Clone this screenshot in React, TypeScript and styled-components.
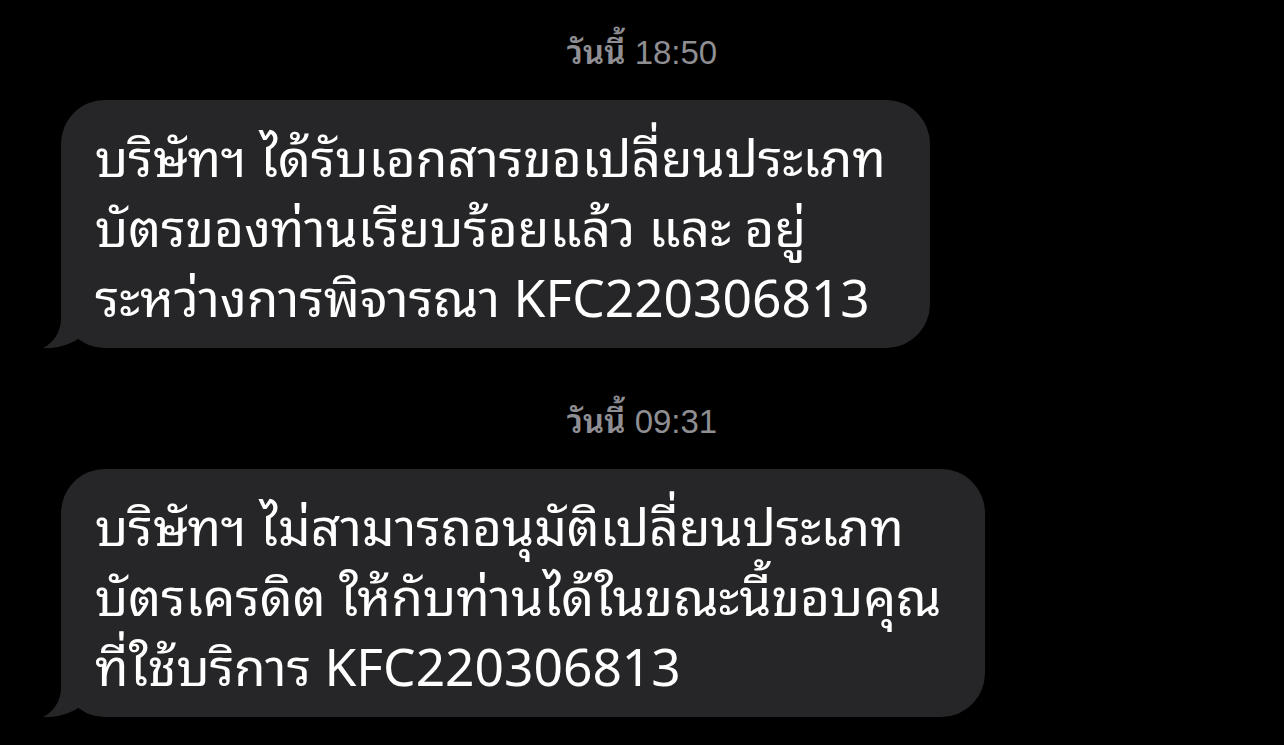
import React from "react";
import styled, { createGlobalStyle } from "styled-components";

const THAI_STACK =
    '"Thonburi", "Noto Sans Thai Looped", "Noto Sans Thai", "Loma", "Garuda", "Waree", "Sawasdee", "Noto Sans", "Liberation Sans", sans-serif';

const BUBBLE_GRAY = "#262628";

const GlobalStyle = createGlobalStyle`
    html, body {
        margin: 0;
        padding: 0;
        background: #000;
    }

    body {
        font-family: ${THAI_STACK};
        -webkit-font-smoothing: antialiased;
    }
`;

interface Message {
    day: string;
    time: string;
    lines: string[];
}

const messages: Message[] = [
    {
        day: "วันนี้",
        time: "18:50",
        lines: [
            "บริษัทฯ ได้รับเอกสารขอเปลี่ยนประเภท",
            "บัตรของท่านเรียบร้อยแล้ว และ อยู่",
            "ระหว่างการพิจารณา KFC220306813",
        ],
    },
    {
        day: "วันนี้",
        time: "09:31",
        lines: [
            "บริษัทฯ ไม่สามารถอนุมัติเปลี่ยนประเภท",
            "บัตรเครดิต ให้กับท่านได้ในขณะนี้ขอบคุณ",
            "ที่ใช้บริการ KFC220306813",
        ],
    },
];

// incoming-message tail, hooked out of the bottom-left corner
const Tail = () => (
    <TailSvg width="50" height="50" viewBox="0 0 50 50">
        <path
            d="M18 0 L18 20 C18 35 10 45 0 50 C12 51 26 47 35 41 L50 30 L50 0 Z"
            fill={BUBBLE_GRAY}
        />
    </TailSvg>
);

export default function App() {
    return (
        <>
            <GlobalStyle />
            <Thread>
                {messages.map(msg => (
                    <Group key={msg.time}>
                        <Stamp>
                            <Day>{msg.day}</Day> {msg.time}
                        </Stamp>
                        <Bubble>
                            {msg.lines.map(line => (
                                <Line key={line}>{line}</Line>
                            ))}
                            <Tail />
                        </Bubble>
                    </Group>
                ))}
            </Thread>
        </>
    );
}

const Thread = styled.div`
    display: flex;
    flex-direction: column;
    width: 1284px;
    height: 745px;
    overflow: hidden;
    background: #000;
    box-sizing: border-box;
    padding: 27px 0 0 61px;
`;

const Group = styled.div`
    display: flex;
    flex-direction: column;
    align-items: flex-start;
    margin-bottom: 48px;
`;

const Stamp = styled.div`
    align-self: stretch;
    margin-left: -61px;
    text-align: center;
    color: #8e8e93;
    font-size: 33px;
    line-height: 46px;
    font-family: "Liberation Sans", ${THAI_STACK};
    margin-bottom: 24px;
`;

const Day = styled.span`
    font-family: ${THAI_STACK};
    font-weight: 600;
`;

const Bubble = styled.div`
    position: relative;
    background: ${BUBBLE_GRAY};
    border-radius: 44px;
    padding: 19px 44px 19px 34px;
    color: #fff;
`;

const Line = styled.div`
    font-size: 51.5px;
    line-height: 70px;
    white-space: nowrap;
`;

const TailSvg = styled.svg`
    position: absolute;
    left: -18px;
    bottom: 0;
`;
